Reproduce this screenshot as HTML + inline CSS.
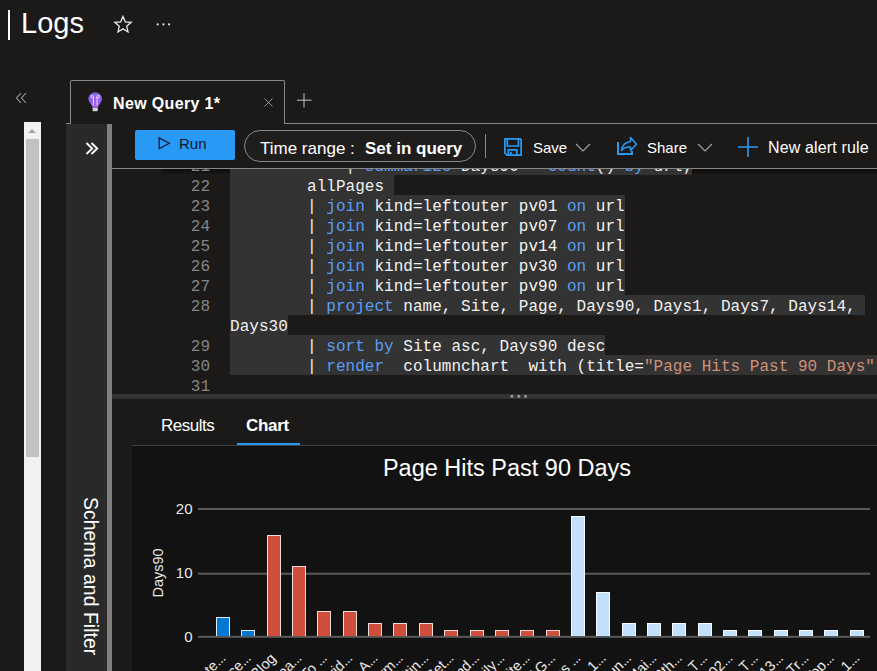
<!DOCTYPE html>
<html><head><meta charset="utf-8">
<style>
*{margin:0;padding:0;box-sizing:border-box}
html,body{width:877px;height:671px;overflow:hidden;background:#1b1a19;font-family:"Liberation Sans",sans-serif;color:#fff}
.a{position:absolute;white-space:nowrap}
#code .l{position:absolute;left:230px;height:20px;line-height:20px;font-family:"Liberation Mono",monospace;font-size:16px;color:#f2f2f2;white-space:pre;letter-spacing:0.025px}
#code .s{background:#333333;display:inline-block;vertical-align:top;height:20px;line-height:25px}
#code .cur{color:#c6c6c6}
#code .n{position:absolute;width:60px;left:150px;text-align:right;height:20px;line-height:25px;font-family:"Liberation Mono",monospace;font-size:16px;color:#858585}
.k{color:#5a9ef2}
.str{color:#ce9178}
svg text{font-family:"Liberation Sans",sans-serif}
</style></head><body>
<!-- header -->
<div class="a" style="left:8px;top:10px;width:2px;height:30px;background:#fff"></div>
<div class="a" style="left:21px;top:6px;font-size:29px;line-height:34px;color:#fff">Logs</div>
<svg class="a" style="left:112.7px;top:14.8px" width="20" height="20" viewBox="0 0 20 20"><path d="M10.00 1.40 L12.27 6.87 L18.18 7.34 L13.68 11.20 L15.05 16.96 L10.00 13.87 L4.95 16.96 L6.32 11.20 L1.82 7.34 L7.73 6.87Z" fill="none" stroke="#e6e6e6" stroke-width="1.3" stroke-linejoin="miter"/></svg>




<svg class="a" style="left:154px;top:21px" width="20" height="7"><circle cx="3.7" cy="3.4" r="1.1" fill="#e0e0e0"/><circle cx="9.4" cy="3.4" r="1.1" fill="#e0e0e0"/><circle cx="15.1" cy="3.4" r="1.1" fill="#e0e0e0"/></svg>

<!-- collapse chevrons -->
<svg class="a" style="left:14px;top:91px" width="14" height="14" viewBox="0 0 14 14"><path d="M7 2 L2.5 7 L7 12 M12 2 L7.5 7 L12 12" fill="none" stroke="#a19f9d" stroke-width="1.1"/></svg>

<!-- left scrollbar -->
<div class="a" style="left:24px;top:122px;width:17px;height:549px;background:#f1f1f1"></div>
<div class="a" style="left:26px;top:139px;width:13px;height:318px;background:#c1c1c1"></div>
<svg class="a" style="left:27px;top:127px" width="10" height="8"><path d="M1 6 L5 2 L9 6Z" fill="#a3a3a3"/></svg>

<!-- tab -->
<div class="a" style="left:70px;top:80px;width:215px;height:44px;border:1px solid #8a8886;border-bottom:none;border-radius:2px 2px 0 0"></div>
<div class="a" style="left:66px;top:123px;width:5px;height:1px;background:#8a8886"></div>
<div class="a" style="left:284px;top:123px;width:593px;height:1px;background:#8a8886"></div>

<!-- left panel -->
<div class="a" style="left:66px;top:124px;width:41px;height:547px;background:#292929"></div>
<div class="a" style="left:107px;top:124px;width:5px;height:547px;background:#82807e"></div>

<!-- toolbar line -->
<div class="a" style="left:112px;top:168px;width:765px;height:1px;background:#8a8886"></div>

<!-- run button -->
<div class="a" style="left:135px;top:130px;width:100px;height:30px;background:#2899f5;border-radius:2px"></div>

<!-- time range pill -->
<div class="a" style="left:244px;top:130px;width:232px;height:32px;border:1px solid #8a8886;border-radius:16px;background:#1f1e1d"></div>
<div class="a" style="left:485px;top:134px;width:1px;height:24px;background:#8a8886"></div>

<!-- tab content -->
<svg class="a" style="left:87px;top:91px" width="17" height="22" viewBox="0 0 17 22">
<defs><linearGradient id="bg" x1="0" y1="0" x2="0.4" y2="1"><stop offset="0" stop-color="#7f66ea"/><stop offset="1" stop-color="#a45fe6"/></linearGradient></defs>
<path d="M8.2 1.4 C4.5 1.4 1.4 4 1.4 7.6 C1.4 10.2 3 11.9 4.1 13.6 C4.9 14.8 5.3 15.6 5.4 16.8 H11 C11.1 15.6 11.5 14.8 12.3 13.6 C13.4 11.9 15 10.2 15 7.6 C15 4 11.9 1.4 8.2 1.4Z" fill="url(#bg)"/>
<rect x="5.6" y="16.7" width="5.2" height="3.5" rx="0.9" fill="#d0d0d0"/>
<path d="M6.4 14.5 V5.8 M10 14.5 V5.8" fill="none" stroke="#f4eefe" stroke-width="0.8"/>
<circle cx="5.3" cy="5.6" r="1.2" fill="none" stroke="#f4eefe" stroke-width="0.8"/>
<circle cx="11.1" cy="5.6" r="1.2" fill="none" stroke="#f4eefe" stroke-width="0.8"/>
</svg>
<div class="a" id="tabt" style="left:113px;top:95px;font-size:16px;line-height:18px;font-weight:bold;color:#fff;letter-spacing:0.35px">New Query 1*</div>
<svg class="a" style="left:263px;top:97px" width="11" height="11" viewBox="0 0 11 11"><path d="M1.5 1.5 L9.5 9.5 M9.5 1.5 L1.5 9.5" stroke="#a8a6a4" stroke-width="0.9"/></svg>
<svg class="a" style="left:296px;top:92px" width="16" height="16" viewBox="0 0 16 16"><path d="M8 1 V15.5 M1 8.2 H15.5" stroke="#c8c6c4" stroke-width="1"/></svg>

<!-- left panel chevrons -->
<svg class="a" style="left:84px;top:140px" width="16" height="16" viewBox="0 0 16 16"><path d="M2.5 3 L8.2 8.5 L2.5 14 M7.5 3 L13.2 8.5 L7.5 14" fill="none" stroke="#fff" stroke-width="1.9"/></svg>
<div class="a" style="left:73px;top:497px;width:40px;height:160px">
 <div style="position:absolute;left:0;top:0;transform-origin:0 0;transform:translate(28px,0) rotate(90deg);font-size:19.5px;line-height:20px;color:#fff;white-space:nowrap">Schema and Filter</div>
</div>

<!-- toolbar contents -->
<svg class="a" style="left:157px;top:136px" width="14" height="15" viewBox="0 0 14 15"><path d="M2.2 1.9 L12.2 7.3 L2.2 12.7 Z" fill="none" stroke="#0e1a3a" stroke-width="1.3" stroke-linejoin="miter"/></svg>
<div class="a" style="left:179px;top:135px;font-size:15px;line-height:18px;color:#10182a">Run</div>
<div class="a" style="left:260px;top:139px;font-size:17px;line-height:20px;color:#fff">Time range :</div>
<div class="a" style="left:365px;top:139px;font-size:17px;line-height:20px;color:#fff;font-weight:bold">Set in query</div>

<svg class="a" style="left:503px;top:137px" width="20" height="20" viewBox="0 0 20 20"><g fill="none" stroke="#2b9af3" stroke-width="1.7"><path d="M1.9 1.9 H17.2 L18.1 2.8 V18.1 H4 L1.9 16 Z"/><path d="M4.3 2 V9 H15.4 V2"/><path d="M5.3 18 V12.8 H13.8 V18"/></g><rect x="7" y="14.8" width="1.8" height="3.2" fill="#2b9af3"/></svg>
<div class="a" style="left:533px;top:139px;font-size:15px;line-height:18px;color:#fff">Save</div>
<svg class="a" style="left:574px;top:141px" width="18" height="12" viewBox="0 0 18 12"><path d="M2 3 L9 10 L16 3" fill="none" stroke="#a19f9d" stroke-width="1.2"/></svg>

<svg class="a" style="left:614px;top:135px" width="26" height="22" viewBox="0 0 26 22"><g fill="none" stroke="#2b9af3"><path d="M4 7 V19 H18 V16" stroke-width="2"/><path d="M16.5 2.5 L22.5 9.2 L16.5 15.5 V12 C12.5 11.6 9.5 13 7.5 15.5 C8.3 10 12 7 16.5 6.5 Z" stroke-width="1.5" stroke-linejoin="round"/></g></svg>
<div class="a" style="left:647px;top:139px;font-size:15px;line-height:18px;color:#fff">Share</div>
<svg class="a" style="left:696px;top:141px" width="18" height="12" viewBox="0 0 18 12"><path d="M2 3 L9 10 L16 3" fill="none" stroke="#a19f9d" stroke-width="1.2"/></svg>

<svg class="a" style="left:736px;top:136px" width="24" height="22" viewBox="0 0 24 22"><path d="M12 1 V21 M2 11 H22" stroke="#2b9af3" stroke-width="1.6"/></svg>
<div class="a" style="left:768px;top:139px;font-size:16px;line-height:18px;color:#fff;letter-spacing:0.15px">New alert rule</div>

<!-- editor top shadow -->
<div class="a" style="left:162px;top:169px;width:715px;height:6px;background:linear-gradient(rgba(8,8,8,0.75),rgba(8,8,8,0))"></div>

<!-- splitter -->
<div class="a" style="left:112px;top:394px;width:765px;height:5px;background:#333"></div>
<svg class="a" style="left:505px;top:392px" width="28" height="9"><circle cx="6.9" cy="4.3" r="1.5" fill="#9a9a9a"/><circle cx="13.8" cy="4.3" r="1.5" fill="#9a9a9a"/><circle cx="20.5" cy="4.3" r="1.5" fill="#9a9a9a"/></svg>

<!-- result tabs -->
<div class="a" style="left:161px;top:415px;font-size:17px;line-height:22px;color:#fff;letter-spacing:-0.5px">Results</div>
<div class="a" style="left:246px;top:415px;font-size:17px;line-height:22px;color:#fff;font-weight:bold;letter-spacing:-0.3px">Chart</div>
<div class="a" style="left:237px;top:443px;width:63px;height:2px;background:#2899f5"></div>
<div class="a" style="left:132px;top:445px;width:745px;height:1px;background:#3d434c"></div>
<div class="a" style="left:132px;top:446px;width:745px;height:225px;background:#121212"></div>

<!-- chart -->
<svg class="a" style="left:0;top:0" width="877" height="671" viewBox="0 0 877 671">
<rect x="198" y="508.00" width="672" height="2" fill="#5a5a5a"/>
<rect x="198" y="572.70" width="672" height="2" fill="#5a5a5a"/>
<rect x="198" y="635.80" width="672" height="2" fill="#5a5a5a"/>
<text x="192.5" y="514.00" text-anchor="end" font-size="15" fill="#e8e8e8">20</text>
<text x="192.5" y="577.90" text-anchor="end" font-size="15" fill="#e8e8e8">10</text>
<text x="192.5" y="641.80" text-anchor="end" font-size="15" fill="#e8e8e8">0</text>
<text transform="translate(162.5,573) rotate(-90)" text-anchor="middle" font-size="14.5" fill="#e8e8e8">Days90</text>
<text x="507" y="476.3" text-anchor="middle" font-size="23.5" fill="#fff">Page Hits Past 90 Days</text>
<rect x="216" y="617" width="14" height="19" fill="#e6eef5"/>
<rect x="217" y="618" width="12" height="18" fill="#0078d4"/>
<rect x="241" y="630" width="14" height="6" fill="#e6eef5"/>
<rect x="242" y="631" width="12" height="5" fill="#0078d4"/>
<rect x="267" y="535" width="14" height="101" fill="#f2dcd8"/>
<rect x="268" y="536" width="12" height="100" fill="#d04e3c"/>
<rect x="292" y="566" width="14" height="70" fill="#f2dcd8"/>
<rect x="293" y="567" width="12" height="69" fill="#d04e3c"/>
<rect x="317" y="611" width="14" height="25" fill="#f2dcd8"/>
<rect x="318" y="612" width="12" height="24" fill="#d04e3c"/>
<rect x="343" y="611" width="14" height="25" fill="#f2dcd8"/>
<rect x="344" y="612" width="12" height="24" fill="#d04e3c"/>
<rect x="368" y="623" width="14" height="13" fill="#f2dcd8"/>
<rect x="369" y="624" width="12" height="12" fill="#d04e3c"/>
<rect x="393" y="623" width="14" height="13" fill="#f2dcd8"/>
<rect x="394" y="624" width="12" height="12" fill="#d04e3c"/>
<rect x="419" y="623" width="14" height="13" fill="#f2dcd8"/>
<rect x="420" y="624" width="12" height="12" fill="#d04e3c"/>
<rect x="444" y="630" width="14" height="6" fill="#f2dcd8"/>
<rect x="445" y="631" width="12" height="5" fill="#d04e3c"/>
<rect x="470" y="630" width="14" height="6" fill="#f2dcd8"/>
<rect x="471" y="631" width="12" height="5" fill="#d04e3c"/>
<rect x="495" y="630" width="14" height="6" fill="#f2dcd8"/>
<rect x="496" y="631" width="12" height="5" fill="#d04e3c"/>
<rect x="520" y="630" width="14" height="6" fill="#f2dcd8"/>
<rect x="521" y="631" width="12" height="5" fill="#d04e3c"/>
<rect x="546" y="630" width="14" height="6" fill="#f2dcd8"/>
<rect x="547" y="631" width="12" height="5" fill="#d04e3c"/>
<rect x="571" y="516" width="14" height="120" fill="#f8fbff"/>
<rect x="572" y="517" width="12" height="119" fill="#c2dffb"/>
<rect x="596" y="592" width="14" height="44" fill="#f8fbff"/>
<rect x="597" y="593" width="12" height="43" fill="#c2dffb"/>
<rect x="622" y="623" width="14" height="13" fill="#f8fbff"/>
<rect x="623" y="624" width="12" height="12" fill="#c2dffb"/>
<rect x="647" y="623" width="14" height="13" fill="#f8fbff"/>
<rect x="648" y="624" width="12" height="12" fill="#c2dffb"/>
<rect x="672" y="623" width="14" height="13" fill="#f8fbff"/>
<rect x="673" y="624" width="12" height="12" fill="#c2dffb"/>
<rect x="698" y="623" width="14" height="13" fill="#f8fbff"/>
<rect x="699" y="624" width="12" height="12" fill="#c2dffb"/>
<rect x="723" y="630" width="14" height="6" fill="#f8fbff"/>
<rect x="724" y="631" width="12" height="5" fill="#c2dffb"/>
<rect x="748" y="630" width="14" height="6" fill="#f8fbff"/>
<rect x="749" y="631" width="12" height="5" fill="#c2dffb"/>
<rect x="774" y="630" width="14" height="6" fill="#f8fbff"/>
<rect x="775" y="631" width="12" height="5" fill="#c2dffb"/>
<rect x="799" y="630" width="14" height="6" fill="#f8fbff"/>
<rect x="800" y="631" width="12" height="5" fill="#c2dffb"/>
<rect x="824" y="630" width="14" height="6" fill="#f8fbff"/>
<rect x="825" y="631" width="12" height="5" fill="#c2dffb"/>
<rect x="850" y="630" width="14" height="6" fill="#f8fbff"/>
<rect x="851" y="631" width="12" height="5" fill="#c2dffb"/>
<text transform="translate(226.10,659.2) rotate(-45)" text-anchor="end" font-size="14.5" fill="#ececec">Upte<tspan letter-spacing="-0.6">...</tspan></text>
<text transform="translate(251.45,659.2) rotate(-45)" text-anchor="end" font-size="14.5" fill="#ececec">Pace<tspan letter-spacing="-0.6">...</tspan></text>
<text transform="translate(276.80,659.2) rotate(-45)" text-anchor="end" font-size="14.5" fill="#ececec">Blog</text>
<text transform="translate(302.15,659.2) rotate(-45)" text-anchor="end" font-size="14.5" fill="#ececec">Idea<tspan letter-spacing="-0.6">...</tspan></text>
<text transform="translate(327.50,659.2) rotate(-45)" text-anchor="end" font-size="14.5" fill="#ececec">To <tspan letter-spacing="-0.6">...</tspan></text>
<text transform="translate(352.85,659.2) rotate(-45)" text-anchor="end" font-size="14.5" fill="#ececec">Grid<tspan letter-spacing="-0.6">...</tspan></text>
<text transform="translate(378.20,659.2) rotate(-45)" text-anchor="end" font-size="14.5" fill="#ececec">x A<tspan letter-spacing="-0.6">...</tspan></text>
<text transform="translate(403.55,659.2) rotate(-45)" text-anchor="end" font-size="14.5" fill="#ececec">Form<tspan letter-spacing="-0.6">...</tspan></text>
<text transform="translate(428.90,659.2) rotate(-45)" text-anchor="end" font-size="14.5" fill="#ececec">Sitin<tspan letter-spacing="-0.6">...</tspan></text>
<text transform="translate(454.25,659.2) rotate(-45)" text-anchor="end" font-size="14.5" fill="#ececec">Set<tspan letter-spacing="-0.6">...</tspan></text>
<text transform="translate(479.60,659.2) rotate(-45)" text-anchor="end" font-size="14.5" fill="#ececec">End<tspan letter-spacing="-0.6">...</tspan></text>
<text transform="translate(504.95,659.2) rotate(-45)" text-anchor="end" font-size="14.5" fill="#ececec">Daily<tspan letter-spacing="-0.6">...</tspan></text>
<text transform="translate(530.30,659.2) rotate(-45)" text-anchor="end" font-size="14.5" fill="#ececec">Site<tspan letter-spacing="-0.6">...</tspan></text>
<text transform="translate(555.65,659.2) rotate(-45)" text-anchor="end" font-size="14.5" fill="#ececec">AG<tspan letter-spacing="-0.6">...</tspan></text>
<text transform="translate(581.00,659.2) rotate(-45)" text-anchor="end" font-size="14.5" fill="#ececec">es <tspan letter-spacing="-0.6">...</tspan></text>
<text transform="translate(606.35,659.2) rotate(-45)" text-anchor="end" font-size="14.5" fill="#ececec">Ve 1<tspan letter-spacing="-0.6">...</tspan></text>
<text transform="translate(631.70,659.2) rotate(-45)" text-anchor="end" font-size="14.5" fill="#ececec">Run<tspan letter-spacing="-0.6">...</tspan></text>
<text transform="translate(657.05,659.2) rotate(-45)" text-anchor="end" font-size="14.5" fill="#ececec">Mai<tspan letter-spacing="-0.6">...</tspan></text>
<text transform="translate(682.40,659.2) rotate(-45)" text-anchor="end" font-size="14.5" fill="#ececec">Bth<tspan letter-spacing="-0.6">...</tspan></text>
<text transform="translate(707.75,659.2) rotate(-45)" text-anchor="end" font-size="14.5" fill="#ececec">Ab T<tspan letter-spacing="-0.6">...</tspan></text>
<text transform="translate(733.10,659.2) rotate(-45)" text-anchor="end" font-size="14.5" fill="#ececec">202<tspan letter-spacing="-0.6">...</tspan></text>
<text transform="translate(758.45,659.2) rotate(-45)" text-anchor="end" font-size="14.5" fill="#ececec">Ab T<tspan letter-spacing="-0.6">...</tspan></text>
<text transform="translate(783.80,659.2) rotate(-45)" text-anchor="end" font-size="14.5" fill="#ececec">013<tspan letter-spacing="-0.6">...</tspan></text>
<text transform="translate(809.15,659.2) rotate(-45)" text-anchor="end" font-size="14.5" fill="#ececec">Ab Tr<tspan letter-spacing="-0.6">...</tspan></text>
<text transform="translate(834.50,659.2) rotate(-45)" text-anchor="end" font-size="14.5" fill="#ececec">Top<tspan letter-spacing="-0.6">...</tspan></text>
<text transform="translate(859.85,659.2) rotate(-45)" text-anchor="end" font-size="14.5" fill="#ececec">Ab 1<tspan letter-spacing="-0.6">...</tspan></text>
</svg>
<!-- /chart -->

<!-- code -->
<div id="code" style="position:absolute;left:112px;top:169px;width:765px;height:225px;overflow:hidden"><div style="position:absolute;left:-112px;top:-169px;width:877px;height:400px">
<div class="n" style="top:155px">21</div>
<div class="l" style="top:155px"><span class="s">            | <span class="k">summarize</span> Days90 = <span class="k">count</span>() <span class="k">by</span> url;</span></div>
<div class="n" style="top:175px">22</div>
<div class="l" style="top:175px"><span class="s">        allPages </span></div>
<div class="n" style="top:195px">23</div>
<div class="l" style="top:195px"><span class="s">        | <span class="k">join</span> kind=leftouter pv01 <span class="k">on</span> url</span></div>
<div class="n" style="top:215px">24</div>
<div class="l" style="top:215px"><span class="s">        | <span class="k">join</span> kind=leftouter pv07 <span class="k">on</span> url</span></div>
<div class="n" style="top:235px">25</div>
<div class="l" style="top:235px"><span class="s">        | <span class="k">join</span> kind=leftouter pv14 <span class="k">on</span> url</span></div>
<div class="n" style="top:255px">26</div>
<div class="l" style="top:255px"><span class="s">        | <span class="k">join</span> kind=leftouter pv30 <span class="k">on</span> url</span></div>
<div class="n" style="top:275px">27</div>
<div class="l" style="top:275px"><span class="s">        | <span class="k">join</span> kind=leftouter pv90 <span class="k">on</span> url</span></div>
<div class="n" style="top:295px">28</div>
<div class="l" style="top:295px"><span class="s">        | <span class="k">project</span> name, Site, Page, Days90, Days1, Days7, Days14, </span></div>
<div class="l" style="top:315px"><span class="s">Days30</span></div>
<div class="n" style="top:335px">29</div>
<div class="l" style="top:335px"><span class="s">        | <span class="k">sort</span> <span class="k">by</span> Site asc, Days90 desc</span></div>
<div class="n cur" style="top:355px">30</div>
<div class="l" style="top:355px"><span class="s">        | <span class="k">render</span>  columnchart  with (title=<span class="str">"Page Hits Past 90 Days"</span>  </span></div>
<div class="n" style="top:375px">31</div>
</div></div>

</body></html>
